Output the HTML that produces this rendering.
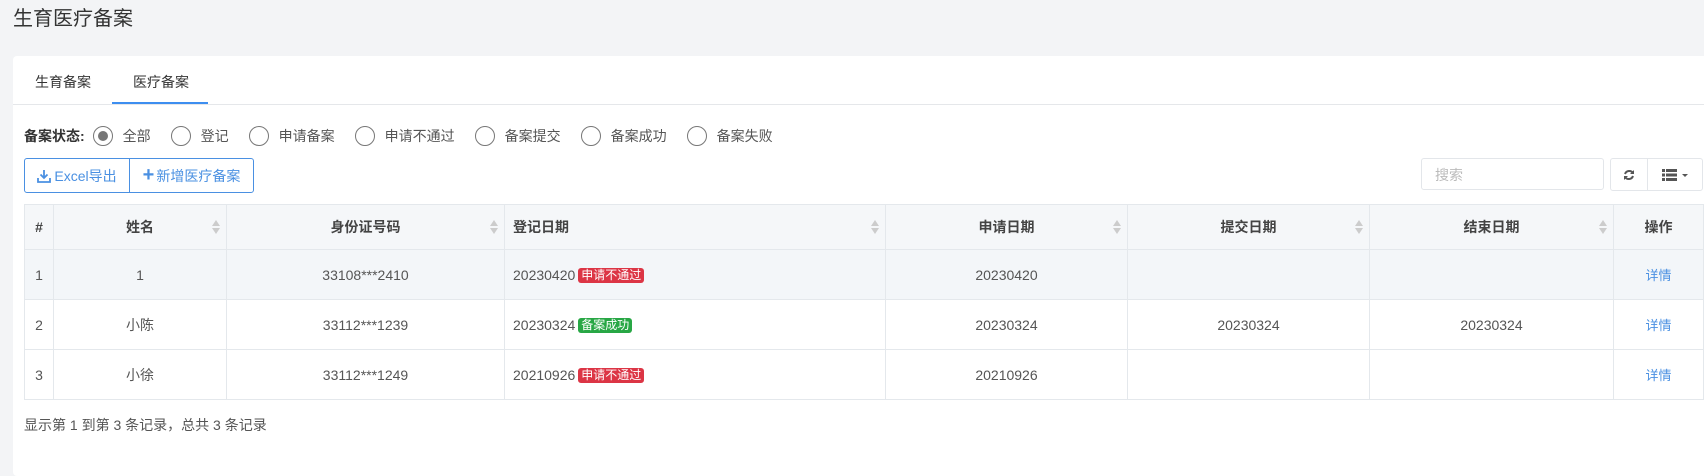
<!DOCTYPE html>
<html><head><meta charset="utf-8"><style>
*{box-sizing:border-box;margin:0;padding:0}
body{width:1704px;height:462px;background:#f3f4f6;font-family:"Liberation Sans","Noto Sans CJK SC",sans-serif;font-size:14px;color:#555;position:relative;overflow:hidden}
.abs{position:absolute}
.title{left:13px;top:6px;font-size:20px;color:#333;line-height:26px}
.card{left:13px;top:56px;width:1700px;height:420px;background:#fff;border-radius:4px}
.tabs{left:13px;top:104px;width:1691px;border-top:1px solid #e5e7ea}
.tab{top:70px;font-size:14px;color:#333;line-height:20px}
.uline{left:112px;top:102px;width:96px;height:2px;background:#3d8ef0}
.radios{left:24px;top:126px;display:flex;align-items:center;color:#555;font-size:14px;line-height:20px}
.radios b{font-weight:bold;color:#333;margin-right:8px}
.r{width:20px;height:20px;border:1px solid #777;border-radius:50%;margin-right:10px;position:relative}
.r.on::after{content:"";position:absolute;left:4px;top:4px;width:10px;height:10px;border-radius:50%;background:#777}
.radios span{margin-right:20px}
.btns{left:24px;top:158px;width:230px;height:35px;border:1px solid #4a90e2;border-radius:3px;display:flex;color:#4a90e2;font-size:14px}
.btns div{display:flex;align-items:center;justify-content:center;height:100%}
.search{left:1421px;top:158px;width:183px;height:32px;border:1px solid #e3e6ea;border-radius:3px;color:#bbb;padding:8px 13px;line-height:16px}
.tool{left:1610px;top:158px;width:93px;height:33px;border:1px solid #e3e6ea;border-radius:3px;display:flex}
table{position:absolute;left:24px;top:204px;width:1680px;border-collapse:collapse;table-layout:fixed}
td,th{border:1px solid #e4e8ec;text-align:center;color:#555;font-size:14px;font-weight:normal}
th{background:#f5f7f9;height:45px;font-weight:bold;color:#444;position:relative}
td{height:50px}
tr.h td{background:#f3f6f9}
.sort{position:absolute;right:6px;top:15px;width:8px;height:14px}
.tag{display:inline-block;color:#fff;font-size:12px;line-height:15px;padding:0 3px;border-radius:3px;margin-left:3px;vertical-align:1px}
.red{background:#dc3545}.green{background:#28a745}
td.lnk{color:#4a90e2;font-size:13px}
.foot{left:24px;top:415px;color:#555;font-size:14px}
</style></head><body>
<div class="abs title">生育医疗备案</div>
<div class="abs card"></div>
<div class="abs tab" style="left:35px;top:72px">生育备案</div>
<div class="abs tab" style="left:133px;top:72px">医疗备案</div>
<div class="abs tabs"></div>
<div class="abs uline"></div>
<div class="abs radios"><b>备案状态:</b><div class="r on"></div><span>全部</span><div class="r"></div><span>登记</span><div class="r"></div><span>申请备案</span><div class="r"></div><span>申请不通过</span><div class="r"></div><span>备案提交</span><div class="r"></div><span>备案成功</span><div class="r"></div><span>备案失败</span></div>
<div class="abs btns"><div style="width:105px;border-right:1px solid #4a90e2"><svg width="14" height="14" viewBox="0 0 14 14" style="margin-right:3px"><path d="M7 1v8M3.5 5.5L7 9l3.5-3.5M1 9v4h12V9" stroke="#4a90e2" stroke-width="1.8" fill="none"/></svg>Excel导出</div><div style="flex:1"><span style="font-size:20px;margin-right:2px;font-weight:bold">+</span>新增医疗备案</div></div>
<div class="abs search">搜索</div>
<div class="abs tool"><div style="width:37px;border-right:1px solid #e3e6ea;display:flex;align-items:center;justify-content:center"><svg width="12" height="12" viewBox="0 0 12 12"><path d="M10 4A4.5 4.5 0 0 0 2 5M2 8a4.5 4.5 0 0 0 8-1" stroke="#555" stroke-width="2" fill="none"/><path d="M11 1v4H7zM1 11V7h4z" fill="#555"/></svg></div><div style="flex:1;display:flex;align-items:center;justify-content:center"><svg width="26" height="12" viewBox="0 0 26 12"><path d="M0 0h3v3H0zM4 0h11v3H4zM0 4.5h3v3H0zM4 4.5h11v3H4zM0 9h3v3H0zM4 9h11v3H4z" fill="#555"/><path d="M20 5h6l-3 3z" fill="#555"/></svg></div></div>
<table>
<colgroup><col style="width:29px"><col style="width:173px"><col style="width:278px"><col style="width:381px"><col style="width:242px"><col style="width:242px"><col style="width:244px"><col></colgroup>
<tr><th>#</th><th>姓名<svg class="sort" viewBox="0 0 8 14"><path d="M4 0l4 6H0zM4 14l4-6H0z" fill="#ccc"/></svg></th><th>身份证号码<svg class="sort" viewBox="0 0 8 14"><path d="M4 0l4 6H0zM4 14l4-6H0z" fill="#ccc"/></svg></th><th style="text-align:left;padding-left:8px">登记日期<svg class="sort" viewBox="0 0 8 14"><path d="M4 0l4 6H0zM4 14l4-6H0z" fill="#ccc"/></svg></th><th>申请日期<svg class="sort" viewBox="0 0 8 14"><path d="M4 0l4 6H0zM4 14l4-6H0z" fill="#ccc"/></svg></th><th>提交日期<svg class="sort" viewBox="0 0 8 14"><path d="M4 0l4 6H0zM4 14l4-6H0z" fill="#ccc"/></svg></th><th>结束日期<svg class="sort" viewBox="0 0 8 14"><path d="M4 0l4 6H0zM4 14l4-6H0z" fill="#ccc"/></svg></th><th>操作</th></tr>
<tr class="h"><td>1</td><td>1</td><td>33108***2410</td><td style="text-align:left;padding-left:8px">20230420<span class="tag red">申请不通过</span></td><td>20230420</td><td></td><td></td><td class="lnk">详情</td></tr>
<tr><td>2</td><td>小陈</td><td>33112***1239</td><td style="text-align:left;padding-left:8px">20230324<span class="tag green">备案成功</span></td><td>20230324</td><td>20230324</td><td>20230324</td><td class="lnk">详情</td></tr>
<tr><td>3</td><td>小徐</td><td>33112***1249</td><td style="text-align:left;padding-left:8px">20210926<span class="tag red">申请不通过</span></td><td>20210926</td><td></td><td></td><td class="lnk">详情</td></tr>
</table>
<div class="abs foot">显示第 1 到第 3 条记录，总共 3 条记录</div>
</body></html>
